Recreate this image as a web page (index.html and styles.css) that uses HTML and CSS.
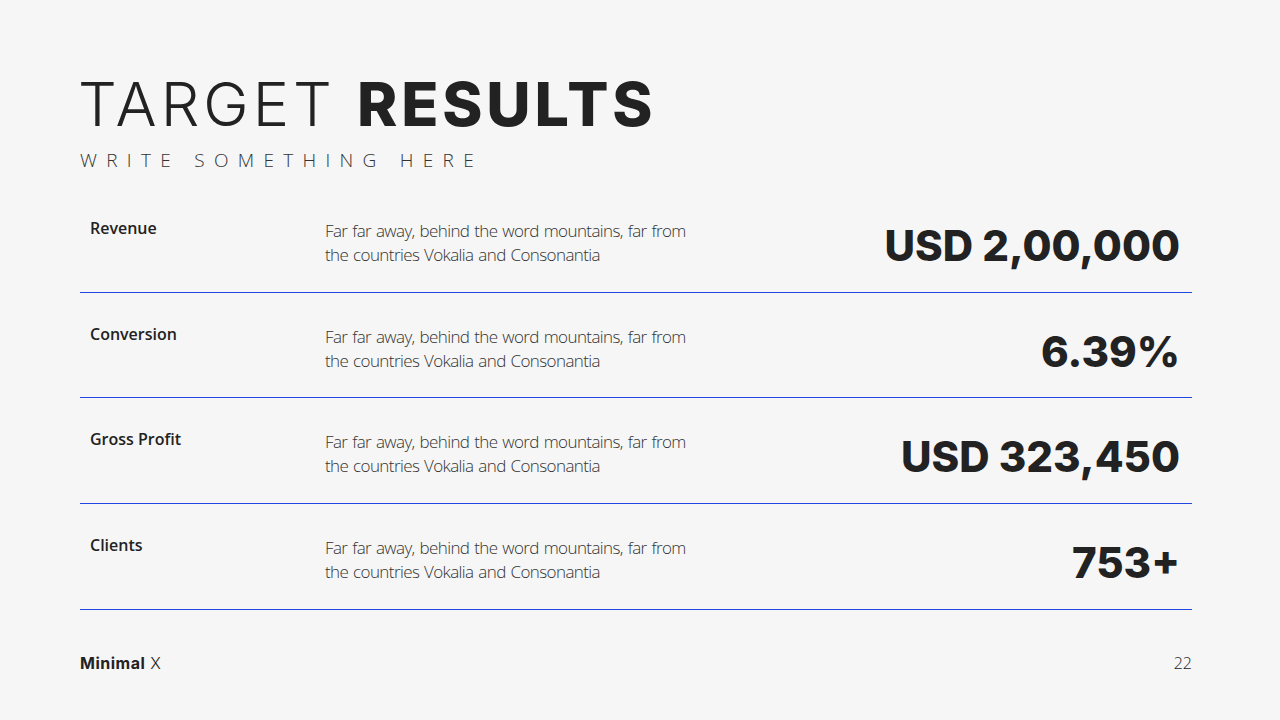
FILE: index.html
```html
<!DOCTYPE html>
<html lang="en">
<head>
<meta charset="utf-8">
<title>Target Results</title>
<link rel="stylesheet" href="styles.css">
</head>
<body>
<main class="slide">
  <header class="head">
    <h1 class="title"><span class="thin">TARGET</span> <span class="bold">RESULTS</span></h1>
    <p class="subtitle">WRITE SOMETHING HERE</p>
  </header>
  <section class="rows">
    <div class="row">
      <div class="label">Revenue</div>
      <p class="desc">Far far away, behind the word mountains, far from<br>the countries Vokalia and Consonantia</p>
      <div class="value">USD 2,00,000</div>
    </div>
    <div class="row">
      <div class="label">Conversion</div>
      <p class="desc">Far far away, behind the word mountains, far from<br>the countries Vokalia and Consonantia</p>
      <div class="value">6.39%</div>
    </div>
    <div class="row">
      <div class="label">Gross Profit</div>
      <p class="desc">Far far away, behind the word mountains, far from<br>the countries Vokalia and Consonantia</p>
      <div class="value">USD 323,450</div>
    </div>
    <div class="row">
      <div class="label">Clients</div>
      <p class="desc">Far far away, behind the word mountains, far from<br>the countries Vokalia and Consonantia</p>
      <div class="value">753+</div>
    </div>
  </section>
  <footer class="foot">
    <div class="brand"><b>Minimal</b> X</div>
    <div class="page">22</div>
  </footer>
</main>
</body>
</html>
```
FILE: styles.css
```css
html, body {
  margin: 0;
  padding: 0;
  background: #f6f6f6;
}
body {
  color: #222;
  font-family: "Open Sans", "Noto Sans", sans-serif;
}
.slide {
  width: 1280px;
  height: 720px;
  box-sizing: border-box;
  padding: 0 88px 0 80px;
  display: flex;
  flex-direction: column;
}
.head {
  padding-top: 66px;
}
.title {
  margin: 0 0 0 -2px;
  font-family: Inter, "Liberation Sans", sans-serif;
  font-size: 61px;
  line-height: 76px;
  font-weight: 300;
  letter-spacing: 4px;
  color: #222;
}
.title .bold {
  font-weight: 800;
  letter-spacing: 3.8px;
}
.subtitle {
  margin: 5px 0 0;
  font-size: 19px;
  line-height: 26px;
  font-weight: 300;
  letter-spacing: 9.3px;
  color: #333;
}
.rows {
  margin-top: 14px;
}
.row {
  height: 105.67px;
  box-sizing: border-box;
  border-bottom: 1px solid #2148e0;
  display: flex;
  align-items: flex-start;
}
.label {
  width: 235px;
  padding: 29px 0 0 10px;
  font-size: 16px;
  line-height: 24px;
  font-weight: 600;
  color: #222;
}
.desc {
  margin: 0;
  padding-top: 32px;
  font-size: 17px;
  line-height: 24px;
  font-weight: 300;
  letter-spacing: -0.6px;
  word-spacing: 1px;
  color: #333;
}
.value {
  margin-left: auto;
  padding: 34px 12px 0 0;
  font-family: Inter, "Liberation Sans", sans-serif;
  font-size: 42px;
  line-height: 50px;
  font-weight: 800;
  color: #222;
}
.foot {
  margin-top: auto;
  padding-bottom: 46px;
  display: flex;
  justify-content: space-between;
  align-items: baseline;
  font-size: 16px;
  line-height: 22px;
}
.brand {
  font-family: Inter, "Liberation Sans", sans-serif;
  font-weight: 300;
  letter-spacing: 0.5px;
}
.brand b {
  font-weight: 700;
}
.page {
  font-weight: 300;
}
```
